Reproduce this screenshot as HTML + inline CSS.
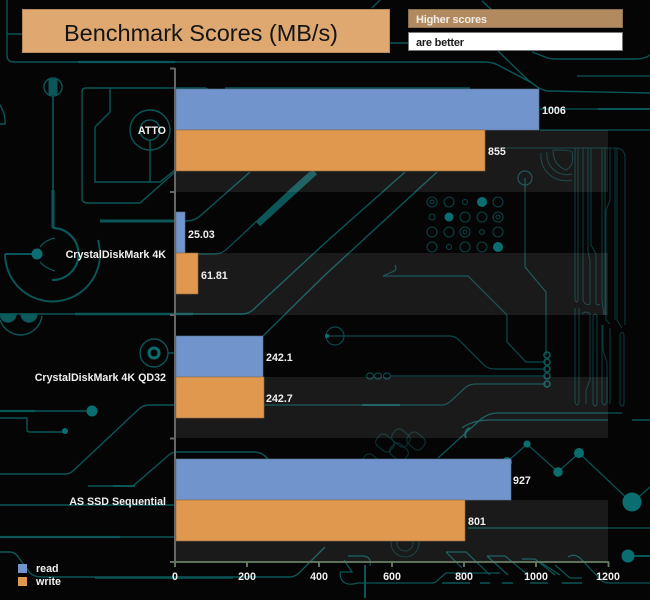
<!DOCTYPE html>
<html><head><meta charset="utf-8"><style>
html,body{margin:0;padding:0;background:#050505;width:650px;height:600px;overflow:hidden}
svg{display:block}
text{font-family:"Liberation Sans",sans-serif}
.l{font-size:10.7px;font-weight:bold;fill:#f0f0f0}
.e{text-anchor:end}.m{text-anchor:middle}
</style></head><body>
<svg width="650" height="600" viewBox="0 0 650 600" xmlns="http://www.w3.org/2000/svg">
<rect width="650" height="600" fill="#050505"/>
<g fill="none" stroke="#0b5658" stroke-width="1.4">
<path d="M7 0V55Q7 62 14 62H485Q492 62 498 65L532 83Q540 90 548 91L650 93"/>
<path d="M7 34H22"/>
<path d="M78 62H175" stroke-width="2.2"/>
<path d="M390 43H408M380 0L372 8M482 1L492 10"/>
<path d="M498 51L528 80L540 89"/>
<path d="M532 52L545 57Q549 59 556 59H635Q645 59 650 55"/>
<path d="M577 76H650M540 109H650M540 130H650" stroke-width="1.2"/>
<path d="M598 109H650" stroke-width="2"/>
<circle cx="53" cy="87" r="9"/>
<path d="M53 79V95" stroke-width="9"/>
<path d="M53 96V190" stroke-width="1.6"/>
<path d="M53 190V228" stroke-width="3"/>
<path d="M53 228A26 26 0 0 1 52 280" stroke-width="2.2"/>
<path d="M5 254H37M5 254A47 47 0 0 0 100 254Q100 248 98 240" stroke-width="1.9"/>
<path d="M40 247Q45 240 55 238M40 262Q45 268 55 271" stroke-width="1.3"/>
<path d="M0 105Q6 115 5 124H0"/>
<path d="M82 92Q82 88 86 88H205L210 90M225 88H470"/>
<path d="M82 92V198Q82 203 88 203H140L175 172"/>
<path d="M110 88V112L95 127V182H160L175 170"/>
<circle cx="150" cy="130" r="20"/><circle cx="150" cy="130" r="10"/>
<path d="M150 140V182"/>
<path d="M100 221H175" stroke-width="3"/>
<path d="M185 221Q195 221 200 216L250 172"/>
<path d="M185 254H215Q222 254 228 248L290 190L310 172" stroke-width="1.2"/>
<path d="M258 224L315 172" stroke-width="6"/>
<path d="M0 314H242Q250 314 256 307L325 243L405 172"/>
<path d="M75 314H193" stroke-width="2.4"/>
<path d="M263 336L325 275L437 172"/>
<path d="M20 335A22 22 0 0 1 0 320M20 335A22 22 0 0 0 42 316"/>
<path d="M0 314A8 8 0 0 0 16 314ZM21 314A8 8 0 0 0 37 314Z" fill="#0c5b5d"/>
<circle cx="154" cy="353" r="14"/><circle cx="154" cy="353" r="5" stroke-width="3" stroke="#0a6e70"/>
<path d="M168 353H175"/>
<path d="M0 411H88"/><path d="M0 411H35" stroke-width="2.2"/>
<path d="M0 418H27V430Q27 432 30 432H65"/>
<path d="M0 474H66Q70 474 74 470L140 408Q144 405 150 405H175"/>
<path d="M88 486H133L170 454Q173 452 178 452H255Q262 452 268 459"/>
<path d="M113 486H135" stroke-width="2"/>
<path d="M0 505H175"/>
<path d="M0 537H175"/><path d="M0 537H120" stroke-width="2.2"/>
<path d="M0 552H10Q15 552 19 558L30 573Q34 577 42 577H290Q295 577 300 572L325 547"/>
<path d="M95 578H233" stroke-width="1.6"/>
<g stroke="#0a4a4c" stroke-width="1.2">
<circle cx="525" cy="178" r="7"/>
<path d="M525 178V267L546 292V355"/>
<path d="M395 265Q398 270 392 272L383 276H468L490 298L507 315V342L526 362H546"/>
<path d="M328 336H450Q455 336 460 341L484 365Q488 369 495 369H546"/>
<ellipse cx="335" cy="336" rx="9" ry="9"/>
<path d="M390 376H546"/>
<ellipse cx="370" cy="376" rx="3.500" ry="3"/><ellipse cx="378" cy="376" rx="3.500" ry="3"/><ellipse cx="387" cy="376" rx="3.500" ry="3"/>
<path d="M264 405H442Q447 405 452 400L466 387Q470 384 476 384H546"/>
</g>
<path d="M362 405H400" stroke-width="2"/>
<g stroke-width="1.6"><circle cx="547" cy="355" r="3"/><circle cx="547" cy="362" r="3"/><circle cx="547" cy="369" r="3"/><circle cx="547" cy="376" r="3"/><circle cx="547" cy="384" r="3"/></g>
<g stroke-width="1.2"><path d="M438 458L480 420Q488 413 498 413H622"/><path d="M462 428Q472 420 492 420H608"/><path d="M632 420H650" stroke-width="1.6"/><path d="M466 438A7 7 0 0 1 470 428" stroke-width="2"/></g>
<g opacity=".55" stroke-width="1.1">
<rect x="376" y="436" width="18" height="14" rx="5" transform="rotate(40 385 443)"/>
<rect x="390" y="445" width="18" height="14" rx="5" transform="rotate(40 399 452)"/>
<rect x="392" y="431" width="18" height="14" rx="5" transform="rotate(40 401 438)"/>
<rect x="407" y="434" width="18" height="14" rx="5" transform="rotate(40 416 441)"/>
<rect x="362" y="456" width="18" height="14" rx="5" transform="rotate(40 371 463)"/>
<circle cx="405" cy="543" r="14"/><circle cx="405" cy="543" r="8"/>
</g>
<path d="M507 462L527 444L558 472L579 453L632 503L650 487" stroke-width="1.2"/>
<path d="M468 528H650" stroke-width="1.2"/>
<path d="M632 556H650" stroke-width="2"/>
<path d="M348 556H362Q372 556 370 566M340 572Q340 588 358 583H432Q436 583 440 578L446 573H500" stroke-width="1.2"/>
<path d="M365 565V598" stroke-width="2"/>
<path d="M340 572H352L344 560" stroke-width="1.2"/>
<path d="M442 583H470M480 583H490M502 583H513M530 583H548M562 583H582" stroke-width="1.5"/>
<path d="M446 552H466L490 575M446 552L462 568M487 556H505L528 575M487 556L508 575M522 559H535L555 575M540 562L560 575M555 565L570 578H582M568 557Q574 553 580 558L598 577Q602 583 610 583H650" stroke-width="1.2"/>
<g fill="none" stroke="#0a4244" stroke-width="1.1">
<circle cx="432" cy="202" r="5"/><circle cx="432" cy="202" r="2"/><circle cx="449" cy="202" r="5"/><circle cx="465" cy="202" r="2.500"/><circle cx="498" cy="202" r="5"/>
<circle cx="432" cy="217" r="3"/><circle cx="465" cy="217" r="5"/><circle cx="482" cy="217" r="5"/><circle cx="498" cy="217" r="5"/><circle cx="498" cy="217" r="2"/>
<circle cx="432" cy="232" r="5"/><circle cx="449" cy="232" r="5"/><circle cx="465" cy="232" r="5"/><circle cx="465" cy="232" r="2"/><circle cx="482" cy="232" r="2.500"/><circle cx="498" cy="232" r="5"/>
<circle cx="432" cy="247" r="5"/><circle cx="449" cy="247" r="2.500"/><circle cx="465" cy="247" r="5"/><circle cx="482" cy="247" r="5"/>
</g>
<g fill="none" stroke="#0a3c3e" stroke-width="1">
<path d="M541 153A25 25 0 0 0 572 180M547 152A20 20 0 0 0 572 174M553 150Q572 150 572 152Q575 165 566 170Q553 165 553 150"/>
<path d="M505 148H615Q625 148 625 158V325"/>
<path d="M575 148V300Q577 304 578 300V148M583 148V300Q585 306 590 304V260L588 252V148M591 148V245L596 254V304Q599 306 600 304"/>
<path d="M602 148V300L604 315M605 148V315"/>
<path d="M610 148V200L606 210V320L610 324"/>
<path d="M615 148V320M617 148V320L622 328"/>
<path d="M575 308V402Q577 408 579 402V308M582 314Q586 310 590 314V380L586 390V404M593 316Q595 312 597 316V404Q595 408 593 404Z"/>
<path d="M602 325V402Q604 408 607 402V362L603 350V325"/>
<path d="M610 328V404M620 335Q622 330 624 335V404Q622 408 620 404Z"/>
</g>
</g>
<g fill="#0a6e70">
<circle cx="37" cy="254" r="5.500"/>
<circle cx="92" cy="411" r="5.500"/>
<circle cx="65" cy="431" r="3"/>
<circle cx="507" cy="462" r="5"/><circle cx="527" cy="444" r="3.500"/><circle cx="558" cy="472" r="4.700"/><circle cx="579" cy="453" r="5"/><circle cx="632" cy="502" r="9.500"/>
<circle cx="628" cy="556" r="6.500"/>
<circle cx="482" cy="202" r="5"/><circle cx="449" cy="217" r="4.500"/><circle cx="498" cy="247" r="5"/>
<circle cx="327" cy="336" r="2"/>
</g>
<!-- stripes -->
<g fill="#fff" fill-opacity=".085">
<rect x="176" y="130" width="432" height="62"/>
<rect x="176" y="253" width="432" height="62"/>
<rect x="176" y="377" width="432" height="61"/>
<rect x="176" y="500" width="432" height="62"/>
</g>
<!-- bars -->
<g fill="#7294cc" stroke="#5a7290" stroke-width=".6">
<rect x="176" y="89" width="363" height="41"/>
<rect x="176" y="212" width="9" height="41"/>
<rect x="176" y="336" width="87" height="41"/>
<rect x="176" y="459" width="335" height="41"/>
</g>
<g fill="#e0984e" stroke="#8c6a40" stroke-width=".6">
<rect x="176" y="130" width="309" height="41"/>
<rect x="176" y="253" width="22" height="41"/>
<rect x="176" y="377" width="88" height="41"/>
<rect x="176" y="500" width="289" height="41"/>
</g>
<!-- axes -->
<path d="M175 68V563M170 68.500H175M170 192H175M170 315H175M170 438.500H175M170 562H175" stroke="#666" stroke-width="2" fill="none"/>
<path d="M175 562H609M175 562V567M247 562V567M319 562V567M392 562V567M464 562V567M536 562V567M608.500 562V567" stroke="#6a8066" stroke-width="1.8" fill="none"/>
<!-- header -->
<rect x="22.500" y="9.500" width="367" height="43" fill="#dfa871" stroke="#b88a5c"/>
<text x="64" y="41" font-size="23.500" fill="#141414" textLength="274">Benchmark Scores (MB/s)</text>
<rect x="408.500" y="9.500" width="214" height="18" fill="#b18a5f" stroke="#8c7050"/>
<text x="416" y="23" font-size="11" font-weight="bold" fill="#f2ede6" textLength="71">Higher scores</text>
<rect x="408.500" y="32.500" width="214" height="18" fill="#fff" stroke="#777"/>
<text x="416" y="46" font-size="11" font-weight="bold" fill="#1a1a1a" textLength="48">are better</text>
<!-- labels -->
<g class="l">
<text class="l e" x="166" y="134">ATTO</text>
<text class="l e" x="166" y="258">CrystalDiskMark 4K</text>
<text class="l e" x="166" y="381">CrystalDiskMark 4K QD32</text>
<text class="l e" x="166" y="505">AS SSD Sequential</text>
<text class="l" x="542" y="114">1006</text>
<text class="l" x="488" y="155">855</text>
<text class="l" x="188" y="238">25.03</text>
<text class="l" x="201" y="279">61.81</text>
<text class="l" x="266" y="361">242.1</text>
<text class="l" x="266" y="402">242.7</text>
<text class="l" x="513" y="484">927</text>
<text class="l" x="468" y="525">801</text>
<text class="l m" x="175" y="580">0</text>
<text class="l m" x="247" y="580">200</text>
<text class="l m" x="319" y="580">400</text>
<text class="l m" x="392" y="580">600</text>
<text class="l m" x="464" y="580">800</text>
<text class="l m" x="536" y="580">1000</text>
<text class="l m" x="608" y="580">1200</text>
</g>
<rect x="18" y="564" width="9" height="9" fill="#7294cc"/>
<rect x="18" y="577" width="9" height="9" fill="#e0984e"/>
<text class="l" x="36" y="572">read</text>
<text class="l" x="36" y="585">write</text>
</svg>
</body></html>
